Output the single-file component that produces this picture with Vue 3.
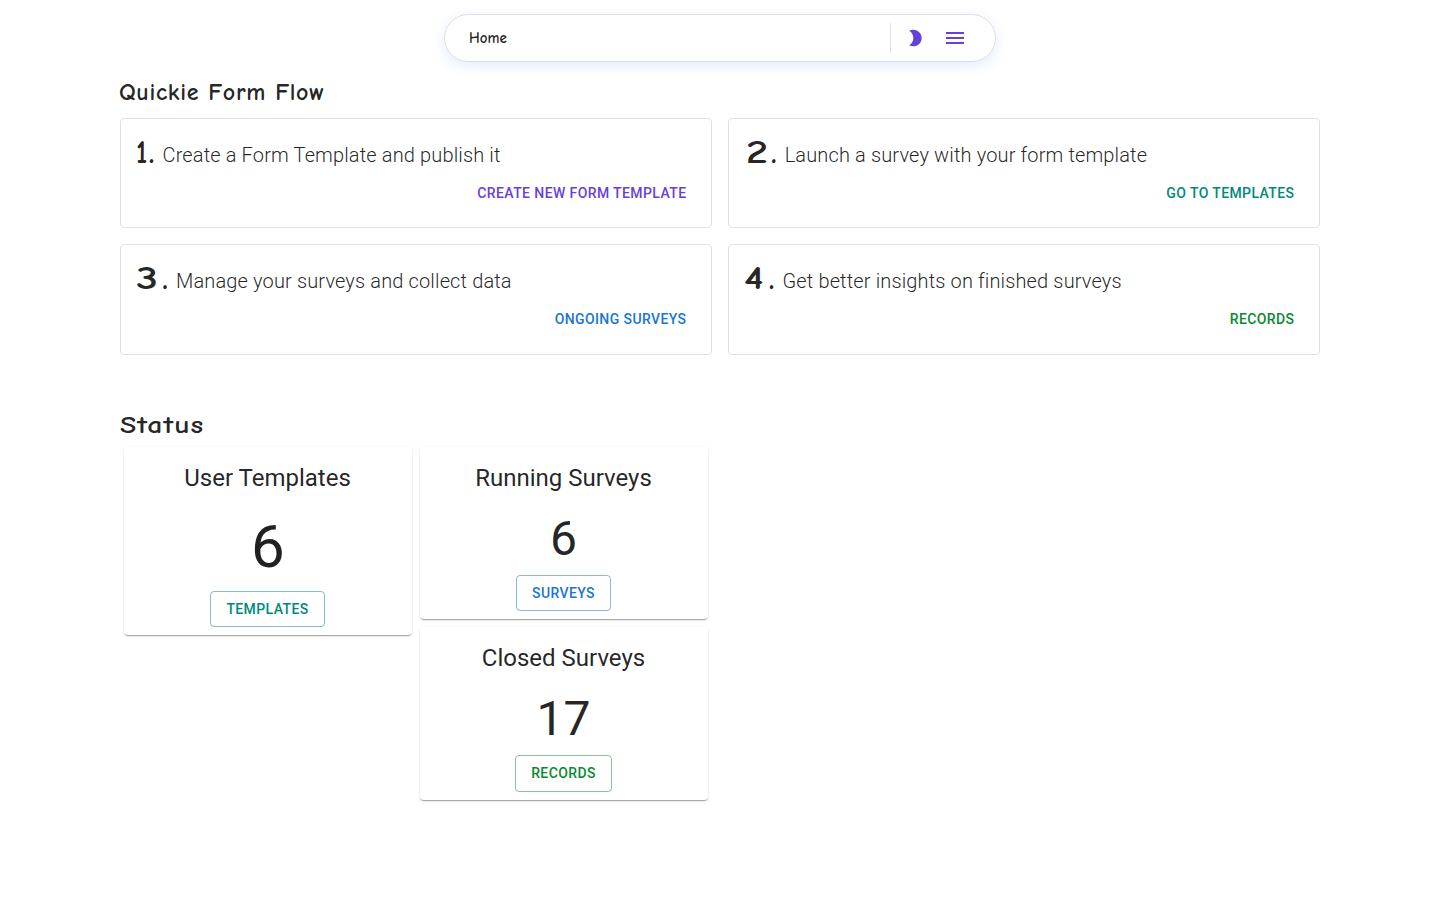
<script setup>
const steps = [
  { n: '1', text: 'Create a Form Template and publish it', action: 'Create new form template', tone: 'purple', w: 'n1' },
  { n: '2', text: 'Launch a survey with your form template', action: 'Go to templates', tone: 'teal', w: 'n2' },
  { n: '3', text: 'Manage your surveys and collect data', action: 'Ongoing surveys', tone: 'blue', w: 'n3' },
  { n: '4', text: 'Get better insights on finished surveys', action: 'Records', tone: 'green', w: 'n4' },
]
const columns = [
  [{ title: 'User Templates', count: 6, action: 'Templates', tone: 'teal', big: true }],
  [
    { title: 'Running Surveys', count: 6, action: 'Surveys', tone: 'blue' },
    { title: 'Closed Surveys', count: 17, action: 'Records', tone: 'green' },
  ],
]
</script>

<template>
  <div class="page">
    <header class="nav">
      <span class="hand home">Home</span>
      <span class="divider"></span>
      <button class="icon moon" aria-label="Toggle theme">
        <svg viewBox="0 0 24 24" width="20" height="20"><path d="M10 2c-1.82 0-3.53.5-5 1.35C7.99 5.08 10 8.3 10 12s-2.01 6.92-5 8.65C6.47 21.5 8.18 22 10 22c5.52 0 10-4.48 10-10S15.52 2 10 2z" /></svg>
      </button>
      <button class="icon menu" aria-label="Menu">
        <svg viewBox="0 0 24 24" width="24" height="24"><path d="M3 18h18v-2H3v2zm0-5h18v-2H3v2zm0-7v2h18V6H3z" /></svg>
      </button>
    </header>

    <main>
      <h2 class="hand heading flow">Quickie Form Flow</h2>
      <section class="steps">
        <article v-for="s in steps" :key="s.n" class="step">
          <p class="line"><span class="hand num" :class="s.w"><span class="digit">{{ s.n }}</span><span class="dot">.</span></span><span>{{ s.text }}</span></p>
          <div class="actions"><button class="btn" :class="s.tone">{{ s.action }}</button></div>
        </article>
      </section>

      <h2 class="hand heading status"><span class="wide">Status</span></h2>
      <section class="stats">
        <div v-for="(col, i) in columns" :key="i" class="col">
          <article v-for="c in col" :key="c.title" class="card">
            <h3>{{ c.title }}</h3>
            <div class="count" :class="{ big: c.big }">{{ c.count }}</div>
            <button class="btn outlined" :class="c.tone">{{ c.action }}</button>
          </article>
        </div>
      </section>
    </main>
  </div>
</template>

<style>
html, body { background: #fff; }
body { overflow-x: hidden; }
</style>

<style scoped>
.page { width: 1440px; height: 898px; padding-top: 14px; box-sizing: border-box; font-family: Roboto, sans-serif; color: rgba(0, 0, 0, 0.87); }
.page * { box-sizing: border-box; }
h2, h3, p { margin: 0; }
button { font-family: inherit; background: none; border: 0; margin: 0; padding: 0; }
.hand { font-family: "Comic Neue", "Comic Sans MS", cursive; }
.nav { width: 552px; height: 48px; margin: 0 auto; padding: 0 28px 0 24px; display: flex; align-items: center; border: 1px solid #dedee0; border-radius: 24px; box-shadow: 0 4px 14px rgba(60, 130, 240, 0.14); }
.home { flex: 1; font-size: 15px; font-weight: 700; line-height: 20px; }
.divider { width: 1px; height: 30px; background: rgba(0, 0, 0, 0.12); }
.icon { display: flex; align-items: center; justify-content: center; color: #673fdb; }
.icon svg { display: block; fill: currentColor; }
.moon { width: 20px; margin-left: 14px; }
.menu { width: 24px; margin-left: 18px; }
main { width: 1200px; margin: 0 auto; }
.heading { height: 32px; line-height: 32px; font-size: 24px; font-weight: 700; white-space: nowrap; }
.flow { margin-top: 14px; margin-left: -1px; letter-spacing: 0.65px; }
.steps { margin-top: 10px; display: grid; grid-template-columns: 592px 592px; gap: 16px; }
.step { height: 110.3px; padding: 15px; border: 1px solid rgba(0, 0, 0, 0.12); border-radius: 4px; }
.line { height: 41px; display: flex; align-items: baseline; font-size: 20px; font-weight: 300; line-height: 39px; letter-spacing: 0.14px; white-space: nowrap; }
.num { display: flex; align-items: baseline; justify-content: space-between; padding-right: 8px; font-size: 32px; font-weight: 900; line-height: 36px; letter-spacing: 0; flex: none; transform: translateY(1px); }
.digit { display: inline-block; transform-origin: 0 50%; }
.n1 { width: 26.5px; }
.n1 .digit { transform: scaleX(0.9); }
.n2 { width: 40.7px; padding-left: 2px; }
.n2 .digit { transform: scaleX(1.38); }
.n3 { width: 40px; }
.n3 .digit { transform: scaleX(1.4); }
.n4 { width: 38.5px; }
.n4 .digit { transform: scaleX(1.3); }
.actions { display: flex; justify-content: flex-end; padding-right: 1.5px; }
.btn { height: 36.5px; padding: 6px 8px; font-size: 14px; font-weight: 500; line-height: 24.5px; letter-spacing: 0.4px; text-transform: uppercase; white-space: nowrap; }
.purple { color: #673fdb; }
.teal { color: #00897b; }
.blue { color: #1976d2; }
.green { color: #0a8a30; }
.status { margin-top: 54px; }
.wide { display: inline-block; letter-spacing: 0.8px; transform: scaleX(1.24); transform-origin: 0 50%; }
.stats { margin-top: 6.1px; padding-left: 4px; display: flex; align-items: flex-start; gap: 8px; }
.col { width: 288px; display: flex; flex-direction: column; gap: 7.8px; }
.card { padding: 15.4px 17px 8px 16px; display: flex; flex-direction: column; align-items: center; border-radius: 4px; background: #fff; box-shadow: 0 2px 1px -1px rgba(0, 0, 0, 0.2), 0 1px 1px 0 rgba(0, 0, 0, 0.14), 0 1px 3px 0 rgba(0, 0, 0, 0.12); }
.card + .card { padding-bottom: 8.4px; }
.card h3 { font-size: 24px; font-weight: 400; line-height: 32px; }
.count { margin: 16.7px 0 8px; font-size: 48px; line-height: 56px; }
.count.big { font-size: 60px; line-height: 72px; letter-spacing: -0.5px; }
.outlined { padding: 5px 15px; border: 1px solid; border-radius: 4px; }
.outlined.teal { border-color: rgba(0, 137, 123, 0.5); }
.outlined.blue { border-color: rgba(25, 118, 210, 0.5); }
.outlined.green { border-color: rgba(10, 138, 48, 0.5); }
</style>
